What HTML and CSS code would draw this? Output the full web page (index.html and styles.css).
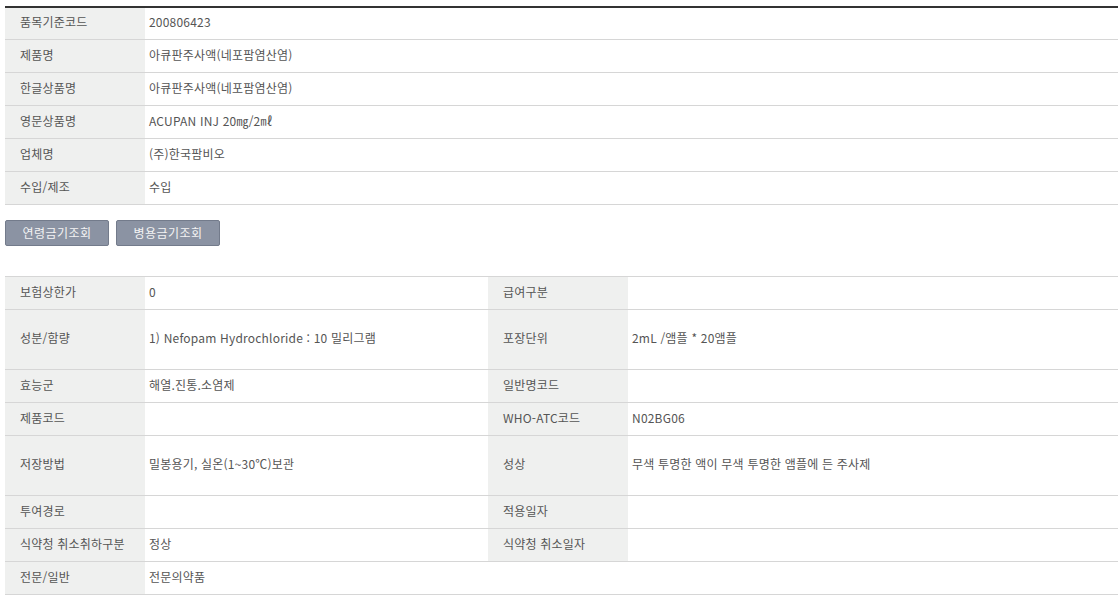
FILE: index.html
```html
<!DOCTYPE html>
<html lang="ko">
<head>
<meta charset="utf-8">
<title>의약품 상세정보</title>
<link rel="stylesheet" href="styles.css">
</head>
<body>
<div class="page">
  <table class="info info-top">
    <colgroup><col class="c-label"><col></colgroup>
    <tbody>
      <tr><th>품목기준코드</th><td>200806423</td></tr>
      <tr><th>제품명</th><td>아큐판주사액(네포팜염산염)</td></tr>
      <tr><th>한글상품명</th><td>아큐판주사액(네포팜염산염)</td></tr>
      <tr><th>영문상품명</th><td>ACUPAN INJ 20㎎/2㎖</td></tr>
      <tr><th>업체명</th><td>(주)한국팜비오</td></tr>
      <tr><th>수입/제조</th><td>수입</td></tr>
    </tbody>
  </table>

  <div class="btns">
    <button class="btn" type="button">연령금기조회</button>
    <button class="btn" type="button">병용금기조회</button>
  </div>

  <table class="info info-bottom">
    <colgroup><col class="c-label"><col class="c-val"><col class="c-label"><col></colgroup>
    <tbody>
      <tr><th>보험상한가</th><td>0</td><th>급여구분</th><td></td></tr>
      <tr class="tall"><th>성분/함량</th><td>1) Nefopam Hydrochloride : 10 밀리그램</td><th>포장단위</th><td>2mL /앰플 * 20앰플</td></tr>
      <tr><th>효능군</th><td>해열.진통.소염제</td><th>일반명코드</th><td></td></tr>
      <tr><th>제품코드</th><td></td><th>WHO-ATC코드</th><td>N02BG06</td></tr>
      <tr class="tall"><th>저장방법</th><td>밀봉용기, 실온(1~30℃)보관</td><th>성상</th><td>무색 투명한 액이 무색 투명한 앰플에 든 주사제</td></tr>
      <tr><th>투여경로</th><td></td><th>적용일자</th><td></td></tr>
      <tr><th>식약청 취소취하구분</th><td>정상</td><th>식약청 취소일자</th><td></td></tr>
      <tr><th>전문/일반</th><td colspan="3">전문의약품</td></tr>
    </tbody>
  </table>
</div>
</body>
</html>
```

FILE: styles.css
```css
* { box-sizing: border-box; }
html, body { margin: 0; padding: 0; background: #fff; }
body {
  font-family: "Noto Sans CJK KR", "Liberation Sans", sans-serif;
  font-size: 12px;
  color: #555;
  overflow: hidden;
}
.page { padding: 6px 0 0 5px; }

.info {
  width: 100%;
  border-collapse: collapse;
  table-layout: fixed;
}
.c-label { width: 140px; }
.c-val { width: 343px; }

.info th,
.info td {
  height: 33px;
  padding: 0 0 2px 4px;
  border-bottom: 1px solid #d6d6d6;
  font-weight: normal;
  text-align: left;
  vertical-align: middle;
  white-space: nowrap;
  line-height: 16px;
  letter-spacing: 0.2px;
}
.info th {
  background: #eff0ef;
  padding-left: 15px;
  color: #555;
}
.info-top { border-top: 2px solid #333; }
.info-top tr:first-child th,
.info-top tr:first-child td { height: 32px; }
.info-bottom { border-top: 1px solid #d6d6d6; }
.info-bottom tr.tall th,
.info-bottom tr.tall td { height: 60px; }

.btns {
  display: flex;
  gap: 7px;
  margin: 15px 0 30px;
}
.btn {
  height: 26px;
  width: 104px;
  padding: 0 0 1px;
  background: #8b93a3;
  border: 1px solid #737b8b;
  border-radius: 2px;
  color: #f4f4f4;
  font-family: "Noto Sans CJK KR", sans-serif;
  font-size: 12px;
  line-height: 23px;
  letter-spacing: 0.5px;
  cursor: pointer;
}
```
